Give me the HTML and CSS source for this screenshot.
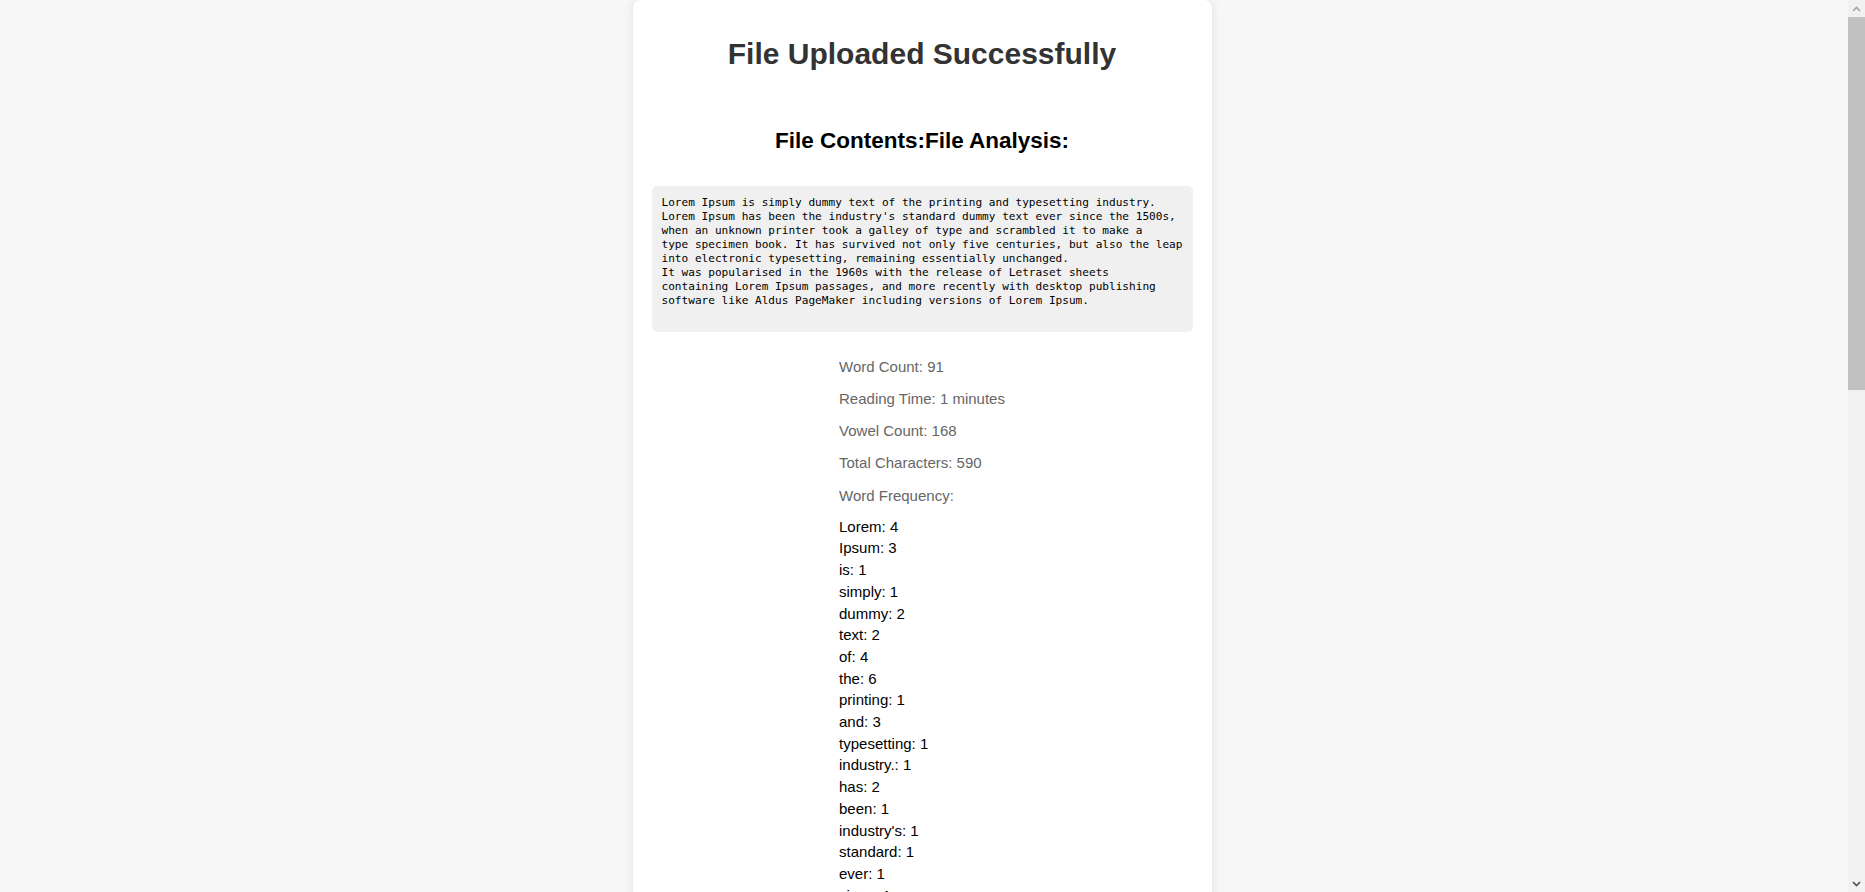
FILE: index.html
```html
<!DOCTYPE html>
<html lang="en">
<head>
<meta charset="utf-8">
<title>File Uploaded Successfully</title>
<link rel="stylesheet" href="styles.css">
</head>
<body>
<div class="card">
  <h1 class="title">File Uploaded Successfully</h1>
  <h2 class="subtitle">File Contents:File Analysis:</h2>
  <pre class="contents">Lorem Ipsum is simply dummy text of the printing and typesetting industry.
Lorem Ipsum has been the industry's standard dummy text ever since the 1500s,
when an unknown printer took a galley of type and scrambled it to make a
type specimen book. It has survived not only five centuries, but also the leap
into electronic typesetting, remaining essentially unchanged.
It was popularised in the 1960s with the release of Letraset sheets
containing Lorem Ipsum passages, and more recently with desktop publishing
software like Aldus PageMaker including versions of Lorem Ipsum.</pre>
  <div class="analysis">
    <div class="stats">
      <p class="stat">Word Count: 91</p>
      <p class="stat">Reading Time: 1 minutes</p>
      <p class="stat">Vowel Count: 168</p>
      <p class="stat">Total Characters: 590</p>
      <p class="stat stat-last">Word Frequency:</p>
      <ul class="freq">
        <li>Lorem: 4</li>
        <li>Ipsum: 3</li>
        <li>is: 1</li>
        <li>simply: 1</li>
        <li>dummy: 2</li>
        <li>text: 2</li>
        <li>of: 4</li>
        <li>the: 6</li>
        <li>printing: 1</li>
        <li>and: 3</li>
        <li>typesetting: 1</li>
        <li>industry.: 1</li>
        <li>has: 2</li>
        <li>been: 1</li>
        <li>industry's: 1</li>
        <li>standard: 1</li>
        <li>ever: 1</li>
        <li>since: 1</li>
        <li>1500s,: 1</li>
        <li>when: 1</li>
        <li>an: 1</li>
        <li>unknown: 1</li>
        <li>printer: 1</li>
        <li>took: 1</li>
        <li>a: 2</li>
        <li>galley: 1</li>
        <li>type: 2</li>
        <li>scrambled: 1</li>
        <li>it: 1</li>
        <li>to: 1</li>
        <li>make: 1</li>
        <li>specimen: 1</li>
        <li>book.: 1</li>
        <li>It: 2</li>
        <li>survived: 1</li>
        <li>not: 1</li>
        <li>only: 1</li>
        <li>five: 1</li>
        <li>centuries,: 1</li>
        <li>but: 1</li>
        <li>also: 1</li>
        <li>leap: 1</li>
        <li>into: 1</li>
        <li>electronic: 1</li>
        <li>typesetting,: 1</li>
        <li>remaining: 1</li>
        <li>essentially: 1</li>
        <li>unchanged.: 1</li>
        <li>was: 1</li>
        <li>popularised: 1</li>
        <li>in: 1</li>
        <li>1960s: 1</li>
        <li>with: 2</li>
        <li>release: 1</li>
        <li>Letraset: 1</li>
        <li>sheets: 1</li>
        <li>containing: 1</li>
        <li>passages,: 1</li>
        <li>more: 1</li>
        <li>recently: 1</li>
        <li>desktop: 1</li>
        <li>publishing: 1</li>
        <li>software: 1</li>
        <li>like: 1</li>
        <li>Aldus: 1</li>
        <li>PageMaker: 1</li>
        <li>including: 1</li>
        <li>versions: 1</li>
        <li>Ipsum.: 1</li>
      </ul>
    </div>
  </div>
</div>
<div class="scrollbar" aria-hidden="true">
  <div class="sb-arrow">
    <svg width="9" height="6" viewBox="0 0 9 6"><path d="M1 5 L4.5 1.5 L8 5" fill="none" stroke="#a3a3a3" stroke-width="1.6"/></svg>
  </div>
  <div class="sb-thumb"></div>
  <div class="sb-rest"></div>
  <div class="sb-arrow">
    <svg width="9" height="6" viewBox="0 0 9 6"><path d="M1 1 L4.5 4.5 L8 1" fill="none" stroke="#505050" stroke-width="1.6"/></svg>
  </div>
</div>
</body>
</html>
```

FILE: styles.css
```css
html, body {
  margin: 0;
  padding: 0;
}

body {
  background: #f7f7f7;
  font-family: "Liberation Sans", Arial, sans-serif;
  font-size: 15px;
  color: #000;
  padding-right: 21px;
}

.card {
  width: 541px;
  margin: 0 auto;
  padding: 20px 19px;
  background: #ffffff;
  border-radius: 8px;
  box-shadow: 0 0 10px rgba(0, 0, 0, 0.1);
}

.title {
  margin: 17px 0 0;
  font-size: 30px;
  font-weight: bold;
  line-height: 34.5px;
  color: #333333;
  text-align: center;
}

.subtitle {
  margin: 56px 0 32px;
  font-size: 22.5px;
  font-weight: bold;
  line-height: 26px;
  color: #000000;
  text-align: center;
}

.contents {
  margin: 0;
  padding: 10px 10px 24px;
  background: #f0f0f0;
  border-radius: 5px;
  font-family: "DejaVu Sans Mono", "Liberation Mono", monospace;
  font-size: 11.1px;
  line-height: 14px;
  color: #000;
  white-space: pre;
}

.analysis {
  margin-top: 11px;
  display: flex;
  flex-direction: column;
  align-items: center;
}

.stats {
  text-align: left;
}

.stat {
  margin: 15px 0;
  line-height: 17.25px;
  color: #666666;
}

.stat-last {
  margin-bottom: 12px;
}

.freq {
  list-style: none;
  margin: 0;
  padding: 0;
}

.freq li {
  line-height: 21.7px;
  color: #000;
}

/* browser scrollbar as seen in the screenshot */
.scrollbar {
  position: fixed;
  top: 0;
  right: 0;
  width: 17px;
  height: 100vh;
  background: #f1f1f1;
  display: flex;
  flex-direction: column;
}

.sb-arrow {
  height: 17px;
  display: flex;
  align-items: center;
  justify-content: center;
  flex: none;
}

.sb-thumb {
  height: 373px;
  background: #c1c1c1;
  flex: none;
}

.sb-rest {
  flex: 1;
}
```
